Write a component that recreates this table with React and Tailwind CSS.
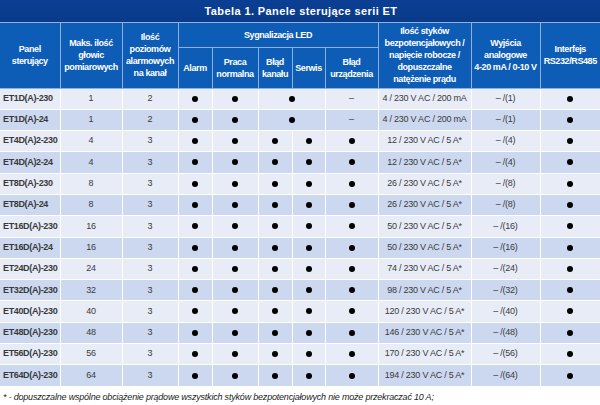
const rows = [
  ["ET1D(A)-230", "1", "2", "merged", "4 / 230 V AC / 200 mA", "– /(1)"],
  ["ET1D(A)-24", "1", "2", "merged", "4 / 230 V AC / 200 mA", "– /(1)"],
  ["ET4D(A)2-230", "4", "3", "full", "12 / 230 V AC / 5 A*", "– /(4)"],
  ["ET4D(A)2-24", "4", "3", "full", "12 / 230 V AC / 5 A*", "– /(4)"],
  ["ET8D(A)-230", "8", "3", "full", "26 / 230 V AC / 5 A*", "– /(8)"],
  ["ET8D(A)-24", "8", "3", "full", "26 / 230 V AC / 5 A*", "– /(8)"],
  ["ET16D(A)-230", "16", "3", "full", "50 / 230 V AC / 5 A*", "– /(16)"],
  ["ET16D(A)-24", "16", "3", "full", "50 / 230 V AC / 5 A*", "– /(16)"],
  ["ET24D(A)-230", "24", "3", "full", "74 / 230 V AC / 5 A*", "– /(24)"],
  ["ET32D(A)-230", "32", "3", "full", "98 / 230 V AC / 5 A*", "– /(32)"],
  ["ET40D(A)-230", "40", "3", "full", "120 / 230 V AC / 5 A*", "– /(40)"],
  ["ET48D(A)-230", "48", "3", "full", "146 / 230 V AC / 5 A*", "– /(48)"],
  ["ET56D(A)-230", "56", "3", "full", "170 / 230 V AC / 5 A*", "– /(56)"],
  ["ET64D(A)-230", "64", "3", "full", "194 / 230 V AC / 5 A*", "– /(64)"],
];

const Dot = () => <span className="inline-block w-[6px] h-[6px] rounded-full bg-black align-middle" />;

const th = "border border-[#8fb0df] bg-[#0d5cb6] text-white font-bold text-[9px] leading-[12px] tracking-[-0.4px] text-center align-middle p-0 whitespace-nowrap";
const td = "border border-white text-center align-middle text-[9px] tracking-[-0.25px] text-[#3a3a3a] p-0 whitespace-nowrap";

const App = () => {
  return (
    <div className="w-[600px] h-[405px] bg-white overflow-hidden" style={{ fontFamily: '"Liberation Sans", Arial, sans-serif' }}>
      <div className="h-[23px] bg-gradient-to-b from-[#0a3f94] to-[#0a3a88] border-b border-[#8fb0df] flex items-center justify-center text-white font-bold text-[11px] tracking-[0.4px] pl-[2px]">
        Tabela 1. Panele sterujące serii ET
      </div>
      <table className="w-[600px] table-fixed border-collapse border-hidden">
        <colgroup>
          <col className="w-[60px]" />
          <col className="w-[62px]" />
          <col className="w-[56px]" />
          <col className="w-[34px]" />
          <col className="w-[46px]" />
          <col className="w-[34px]" />
          <col className="w-[33px]" />
          <col className="w-[53px]" />
          <col className="w-[93px]" />
          <col className="w-[69px]" />
          <col className="w-[60px]" />
        </colgroup>
        <thead>
          <tr className="h-[24px]">
            <th rowSpan={2} className={th}>Panel<br />sterujący</th>
            <th rowSpan={2} className={th}>Maks. ilość<br />głowic<br />pomiarowych</th>
            <th rowSpan={2} className={th}>Ilość<br />poziomów<br />alarmowych<br />na kanał</th>
            <th colSpan={5} className={th}>Sygnalizacja LED</th>
            <th rowSpan={2} className={th}>Ilość styków<br />bezpotencjałowych /<br />napięcie robocze /<br />dopuszczalne<br />natężenie prądu</th>
            <th rowSpan={2} className={th}>Wyjścia<br />analogowe<br />4-20 mA / 0-10 V</th>
            <th rowSpan={2} className={th}>Interfejs<br />RS232/RS485</th>
          </tr>
          <tr className="h-[41px]">
            <th className={th}>Alarm</th>
            <th className={th}>Praca<br />normalna</th>
            <th className={th}>Błąd<br />kanału</th>
            <th className={th}>Serwis</th>
            <th className={th}>Błąd<br />urządzenia</th>
          </tr>
        </thead>
        <tbody>
          {rows.map((r, i) => (
            <tr key={r[0]} className={i % 2 === 0 ? "h-[21.3px] bg-[#e8ecf7]" : "h-[21.3px] bg-[#ccd8ef]"}>
              <td className={td + " text-left pl-[3px] font-bold text-[#1a1a1a] tracking-[-0.35px]"}>{r[0]}</td>
              <td className={td}>{r[1]}</td>
              <td className={td}>{r[2]}</td>
              <td className={td}><Dot /></td>
              <td className={td}><Dot /></td>
              {r[3] === "merged" ? (
                <>
                  <td colSpan={2} className={td}><Dot /></td>
                  <td className={td}>–</td>
                </>
              ) : (
                <>
                  <td className={td}><Dot /></td>
                  <td className={td}><Dot /></td>
                  <td className={td}><Dot /></td>
                </>
              )}
              <td className={td}>{r[4]}</td>
              <td className={td}>{r[5]}</td>
              <td className={td}><Dot /></td>
            </tr>
          ))}
        </tbody>
      </table>
      <div className="pl-[3px] pt-[5px] text-[9px] tracking-[-0.2px] italic text-[#222]">
        * - dopuszczalne wspólne obciążenie prądowe wszystkich styków bezpotencjałowych nie może przekraczać 10 A;
      </div>
    </div>
  );
};

export default App;
